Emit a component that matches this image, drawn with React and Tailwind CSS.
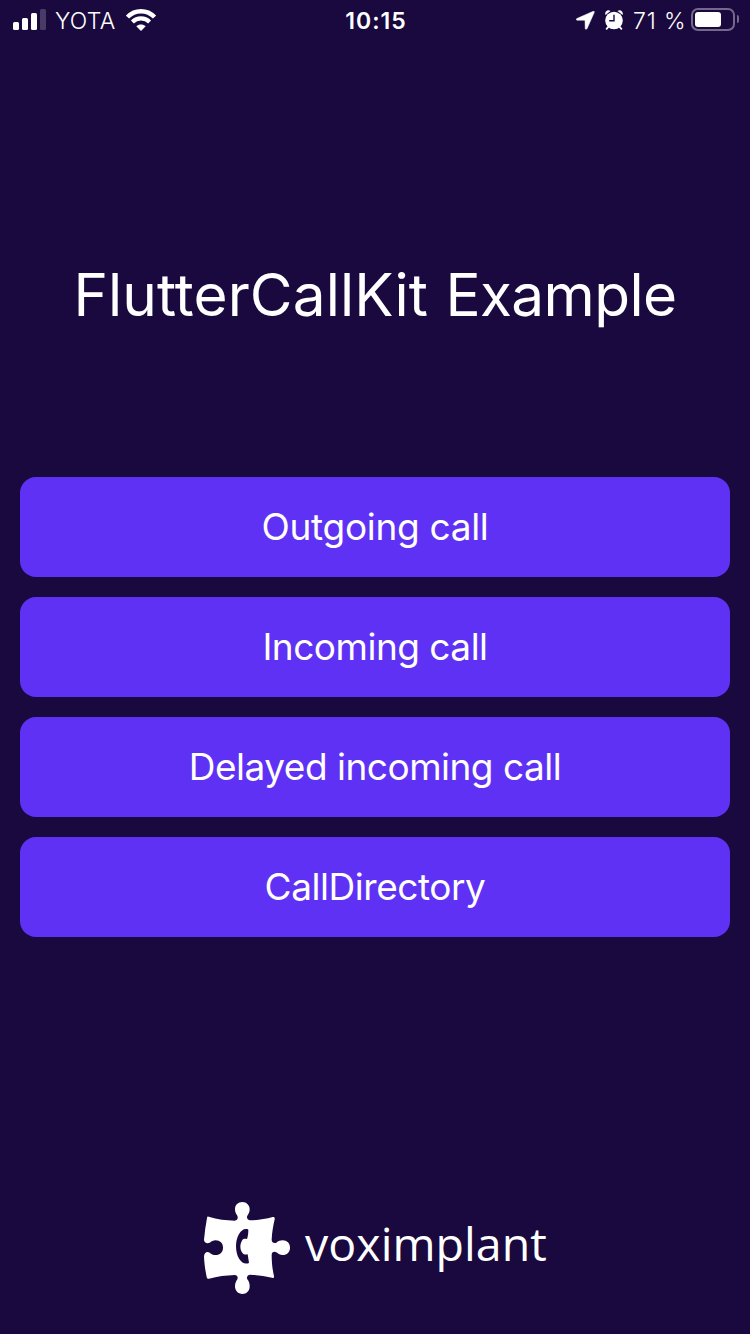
const actions = [
  { label: "Outgoing call", spacing: "tracking-[-0.3px]" },
  { label: "Incoming call", spacing: "tracking-[-0.5px]" },
  { label: "Delayed incoming call", spacing: "tracking-[-0.5px]" },
  { label: "CallDirectory", spacing: "tracking-[-0.45px]" },
];

function Signal() {
  return (
    <div className="flex h-[21px] w-[33px] items-end gap-[3px]">
      <span className="h-2 w-1.5 rounded-[1.5px] bg-white" />
      <span className="h-3 w-1.5 rounded-[1.5px] bg-white" />
      <span className="h-[17px] w-1.5 rounded-[1.5px] bg-white" />
      <span className="h-[21px] w-1.5 rounded-[1.5px] bg-[#483c67]" />
    </div>
  );
}

function Wifi() {
  return (
    <svg className="h-[22px] w-[30px]" viewBox="0 0 30 22" fill="none" stroke="white">
      <path d="M1.5 8.1C9 .3 21 .3 28.500 8.100" strokeWidth="4.300" />
      <path d="M6.400 13C11.200 8.200 18.800 8.200 23.600 13" strokeWidth="4.100" />
      <path d="M15 22 10.300 17.300C12.900 14.900 17.100 14.900 19.700 17.300Z" fill="white" stroke="none" />
    </svg>
  );
}

function Location() {
  return (
    <svg className="h-[19px] w-[19px]" viewBox="0 0 19 19" fill="white">
      <path d="M17.300.3.900 7.500C-.2 8 .1 9.200 1.200 9.200L9 9.300 9.200 17.300C9.200 18.500 10.600 18.700 11.100 17.600L18.200 1.500C18.600.6 18.200 0 17.300.3Z" stroke="white" strokeWidth="0.500" />
    </svg>
  );
}

function Alarm() {
  return (
    <svg className="h-5 w-[18px]" viewBox="0 0 18 20" fill="none">
      <path d="M.4 4.900C-.8 1.500 3-.9 5.500 1.100ZM17.600 4.900C18.800 1.500 15-.9 12.500 1.100Z" fill="white" />
      <path d="m3.400 16.800-1.800 2m13-2 1.800 2" stroke="white" strokeWidth="1.800" strokeLinecap="round" />
      <circle cx="9" cy="10.500" r="8.800" fill="white" />
      <path d="M9 5.200v5.600H4.700" stroke="#19093e" strokeWidth="1.400" strokeLinecap="round" />
    </svg>
  );
}

function Battery() {
  return (
    <div className="flex items-center gap-[2px]">
      <div className="h-[23px] w-11 rounded-[7px] border-2 border-[#75698b] p-[2px]">
        <div className="h-full w-[26px] rounded-[3px] bg-white" />
      </div>
      <div className="h-2 w-[2px] rounded-r-full bg-[#75698b]" />
    </div>
  );
}

function PuzzleLogo() {
  return (
    <svg className="h-[92px] w-[86px] shrink-0" viewBox="42 36 258 276" fill="white">
      <path d="M56 80C82 88 109 91 134 92C142 91 145 84 142 77C137 71 135 65 135 58C135 45 144 36 157 36C170 36 179 46 179 58C179 66 176 72 172 77C169 84 173 90 181 91C203 91 226 87 248 81C253 80 255 83 254 88C249 109 246 129 245 149C245 157 252 161 259 158C265 153 271 151 278 151C291 151 300 160 300 173C300 186 291 195 278 195C270 195 265 192 259 187C252 183 245 187 245 195C245 216 247 237 252 258C253 263 251 265 246 263C224 258 203 255 181 254C172 255 169 261 172 268C177 274 179 281 179 289C179 303 170 312 157 312C144 312 135 302 135 289C135 281 138 274 142 268C145 261 141 255 134 255C108 256 82 259 57 266C53 267 51 265 50 261C46 241 43 222 42 200C42 188 51 183 59 188C64 192 69 195 77 195C90 195 99 186 99 173C99 160 90 151 77 151C70 151 64 154 59 158C51 162 42 157 42 149C44 127 47 106 51 84C52 80 53 79 56 80Z" />
      <path d="M174 118C155 111 138 137 138 169C138 202 156 228 177 219L173 193C169 194 161 195 158 190C149 178 149 163 157 150C160 145 166 146 171 147C174 139 175 129 175 120Z" fill="#19093e" />
    </svg>
  );
}

export default function App() {
  return (
    <main className="flex h-[1334px] w-[750px] flex-col bg-[#19093e] font-['Inter','Liberation_Sans',sans-serif] text-white">
      <header className="grid h-[38px] grid-cols-3 items-center pr-[11px] pl-[13px] text-[23px] leading-none">
        <div className="flex items-center">
          <Signal />
          <span className="ml-[9px] w-[61px] pt-1 whitespace-nowrap font-[350] tracking-[0.3px]">YOTA</span>
          <span className="ml-[10px] pt-[2px]"><Wifi /></span>
        </div>
        <time className="pt-1 text-center font-semibold tracking-[1px]">10:15</time>
        <div className="flex items-center justify-end">
          <span className="pt-[3px]"><Location /></span>
          <span className="ml-[10px] pt-[2px]"><Alarm /></span>
          <span className="ml-[10px] w-[54px] pt-1 whitespace-nowrap font-[350] tracking-[0.9px]">71 %</span>
          <span className="ml-[4px]"><Battery /></span>
        </div>
      </header>

      <h1 className="mt-[217px] text-center text-[58.5px] leading-20 font-normal whitespace-nowrap">
        <span className="tracking-[0.1px]">FlutterCallKit</span>{" "}
        <span className="ml-[1px] tracking-[-0.6px]">Example</span>
      </h1>

      <nav className="mt-[142px] flex flex-col gap-5 px-5">
        {actions.map(({ label, spacing }) => (
          <button key={label} type="button" className={`h-[100px] rounded-[16px] bg-[#5f31f5] text-[37px] ${spacing}`}>
            {label}
          </button>
        ))}
      </nav>

      <footer className="mt-auto mb-10 flex items-center pl-[204px]">
        <PuzzleLogo />
        <span className="mb-[10px] ml-[15px] font-['Open_Sans','Noto_Sans',sans-serif] text-[46.5px] leading-none font-[370] tracking-[0.05px]">
          voximplant
        </span>
      </footer>
    </main>
  );
}
